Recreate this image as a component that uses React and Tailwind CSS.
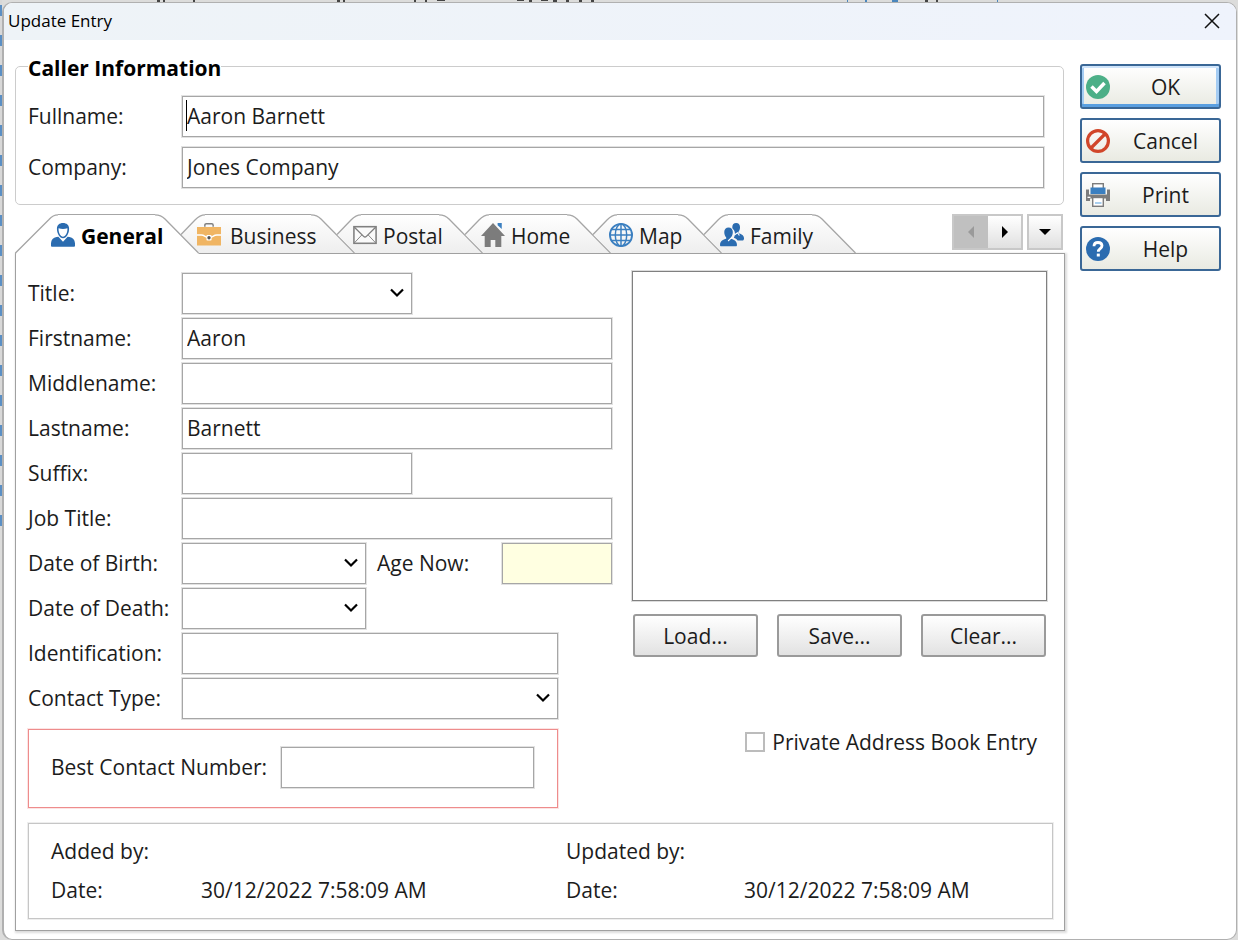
import { useState } from "react";

const FIELD = "h-[41px] min-w-0 border border-[#a6a6a6] px-1 pb-[2px] text-[21px] text-[#1c1c1c] shadow-[0_0_0_1px_#e2e2e2] outline-none";
const INPUT = `${FIELD} bg-white`;

function UserIcon() {
  return (
    <svg width="24" height="24" viewBox="0 0 26 26" className="shrink-0">
      <path d="M0 24.500c-.4-5.500 1.500-8 6-9.200l2-.4 5 5.500 5-5.500 2 .4c4.500 1.200 6.400 3.700 6 9.200-.1.900-.5 1.300-1 1.300H1c-.5 0-.9-.4-1-1.300z" fill="#2b6cb0" />
      <path d="M13 0c3.900 0 6.600 2.300 6.600 6.300 0 5-3 10.300-6.600 10.300S6.400 11.300 6.400 6.300C6.400 2.300 9.100 0 13 0z" fill="#2b6cb0" />
      <path d="M8.200 5.800c3.200 1 6.400 1 9.600 0 .3 4.800-2.300 9.200-4.800 9.200s-5.100-4.400-4.800-9.200z" fill="#fff" />
    </svg>
  );
}

function CaseIcon() {
  return (
    <svg width="24" height="24" viewBox="0 0 26 26" className="shrink-0">
      <path d="M8.500 4V2.400c0-1 .6-1.600 1.600-1.600h5.800c1 0 1.600.6 1.600 1.600V4" fill="none" stroke="#808080" strokeWidth="1.600" />
      <path d="M0 4.300h26v20.200H0z" fill="#f0b563" />
      <path d="M0 13h4.500c3.800 0 4.700 3 8.500 3s4.700-3 8.500-3H26" fill="none" stroke="#fff" strokeWidth="1.400" />
      <rect x="10.200" y="13" width="5.600" height="6" rx="1" fill="#fff" />
      <circle cx="13" cy="16" r="1.800" fill="#555" />
    </svg>
  );
}

function MailIcon() {
  return (
    <svg width="24" height="24" viewBox="0 0 26 26" className="shrink-0" fill="none" stroke="#808080">
      <rect x="1" y="4" width="24" height="18" strokeWidth="1.700" fill="#fafafa" />
      <path d="M1.500 4.500l10 10c1 1 2 1 3 0l10-10" strokeWidth="1.500" />
      <path d="M1.500 21.500l8-8.500M24.500 21.500l-8-8.500" strokeWidth="1" />
    </svg>
  );
}

function HomeIcon() {
  return (
    <svg width="24" height="24" viewBox="0 0 26 26" className="shrink-0">
      <path d="M18 0h4.500v6.500L18 2.500z" fill="#3b7fc0" />
      <path d="M13 0L0 14h4v12h6.500v-7.500h5V26H22V14h4z" fill="#7c7c7c" />
    </svg>
  );
}

function GlobeIcon() {
  return (
    <svg width="24" height="24" viewBox="0 0 26 26" className="shrink-0" fill="none" stroke="#3b7fc0" strokeWidth="1.600">
      <circle cx="13" cy="13" r="12" strokeWidth="2" />
      <ellipse cx="13" cy="13" rx="6.200" ry="12" />
      <path d="M13 1v24M1 13h24M3 7h20M3 19h20" />
    </svg>
  );
}

function FamilyIcon() {
  return (
    <svg width="24" height="24" viewBox="0 0 26 26" className="shrink-0" fill="#2b6cb0">
      <path d="M17.500 0c2.600 0 4.200 1.700 4.200 4.500 0 2.200-.8 4-1.800 5.200v1.500c2.800.8 5.700 1.700 6.100 5 .1 1.400-.3 2.300-1 2.800h-6c-.8-1.600-2.300-2.500-4-3.100 1.600-2.300 1.700-6-.2-8.600-.8-1-1.500-1.300-1.500-2.800C13.300 1.700 14.900 0 17.500 0z" />
      <path d="M9.300 4.800c2.800 0 4.600 1.900 4.600 4.900 0 2.600-1 4.700-2.100 6v1.400c3.100.9 6.300 1.800 6.600 6.600 0 1-.4 1.600-1.200 1.600H1.200c-.8 0-1.200-.6-1.200-1.600.3-4.800 3.500-5.700 6.700-6.600v-1.400c-1.100-1.300-2.100-3.400-2.100-6 0-3 1.900-4.900 4.700-4.900z" />
      <path d="M8.800 19.500l4-4M15.500 13l3.500-2.500 2 3" stroke="#fff" strokeWidth="1.200" fill="none" />
    </svg>
  );
}

function OkIcon() {
  return (
    <svg width="24" height="24" viewBox="0 0 24 24" className="shrink-0">
      <circle cx="12" cy="12" r="12" fill="#4caf87" />
      <path d="M5.500 11.500l5 5 8-8.500" fill="none" stroke="#fff" strokeWidth="3.500" />
    </svg>
  );
}

function CancelIcon() {
  return (
    <svg width="24" height="24" viewBox="0 0 24 24" className="shrink-0" fill="none" stroke="#d1462a" strokeWidth="3.200">
      <circle cx="12" cy="12" r="10.400" />
      <path d="M19 5L5 19" />
    </svg>
  );
}

function PrintIcon() {
  return (
    <svg width="24" height="24" viewBox="0 0 24 24" className="shrink-0">
      <rect x="6.700" y=".7" width="10.600" height="6" fill="#fff" stroke="#7c7c7c" strokeWidth="1.400" />
      <path d="M0 6.500h3v5h18v-5h3V18h-4v-2.500H4V18H0z" fill="#7c7c7c" />
      <path d="M4.500 4.500h15V11h-15z" fill="#3b7fc0" />
      <rect x="1.500" y="13.700" width="3" height="1.300" fill="#fff" />
      <rect x="6.700" y="14.500" width="10.600" height="8.800" fill="#fff" stroke="#7c7c7c" strokeWidth="1.400" />
      <path d="M9 20h6.500" stroke="#8cc0ea" strokeWidth="1.300" />
    </svg>
  );
}

function HelpIcon() {
  return (
    <svg width="24" height="24" viewBox="0 0 24 24" className="shrink-0">
      <circle cx="12" cy="12" r="12" fill="#2b6cb0" />
      <path d="M8 9.300c0-2.500 1.600-3.800 4-3.800s4 1.200 4 3.300c0 2.900-3.700 2.900-3.700 6" fill="none" stroke="#fff" strokeWidth="2.800" />
      <rect x="10.800" y="16.600" width="3" height="2.900" fill="#fff" />
    </svg>
  );
}

const TABS = [
  { name: "General", Icon: UserIcon, body: "w-[97px]", text: "pl-[6px]" },
  { name: "Business", Icon: CaseIcon, body: "w-[106px]", text: "pl-[9px]" },
  { name: "Postal", Icon: MailIcon, body: "w-[78px]", text: "pl-[6px]" },
  { name: "Home", Icon: HomeIcon, body: "w-[78px]", text: "pl-[6px]" },
  { name: "Map", Icon: GlobeIcon, body: "w-[61px]", text: "pl-[6px]" },
  { name: "Family", Icon: FamilyIcon, body: "w-[84px]", text: "pl-[6px]" },
];

function Tab({ tab, index, selected, onSelect }) {
  const { name, Icon, body, text } = tab;
  const id = `tab-shade-${index}`;
  const fill = selected ? "#fff" : `url(#${id})`;
  const base = selected ? 40 : 39;
  const shade = (
    <defs>
      <linearGradient id={id} gradientUnits="userSpaceOnUse" x1="0" y1="0" x2="0" y2="39">
        <stop offset="0" stopColor="#ffffff" />
        <stop offset="1" stopColor="#eeeeee" />
      </linearGradient>
    </defs>
  );
  return (
    <button
      type="button"
      role="tab"
      aria-selected={selected}
      onClick={onSelect}
      className={`relative flex h-10 shrink-0 ${index ? "-ml-[18px]" : ""} ${selected ? "z-10" : ""}`}
    >
      {index ? (
        <svg width="24" height="40" className="shrink-0">
          {shade}
          <path d="M0 20.500L14 6Q19 .8 24 .8V39H18.500z" fill={fill} />
          <path d="M0 20.500L14 6Q19 .8 24 .8" fill="none" stroke="#a6a6a6" strokeWidth="1.300" />
        </svg>
      ) : (
        <svg width="43" height="40" className="shrink-0">
          {shade}
          <path d={`M.5 ${base}V39L34 5.500Q38 .8 43 .8V${base}z`} fill={fill} />
          <path d="M.5 40V39L34 5.500Q38 .8 43 .8" fill="none" stroke="#a6a6a6" strokeWidth="1.300" />
        </svg>
      )}
      <span className={`border-t border-[#a6a6a6] ${body} ${selected ? "h-10 bg-white" : "h-[39px] bg-linear-to-b from-white to-[#eeeeee]"}`} />
      <svg width="44" height="40" className="shrink-0">
        <path d={`M0 .8Q6 .8 10 5L43.500 39V${base}H0z`} fill={fill} />
        <path d="M0 .8Q6 .8 10 5L43.500 39" fill="none" stroke="#a6a6a6" strokeWidth="1.300" />
      </svg>
      <span className={`absolute inset-y-0 flex items-center pt-[2px] whitespace-nowrap ${index ? "left-[16px]" : "left-[36px]"}`}>
        <Icon />
        <span className={`pt-px ${text} ${selected ? "font-bold text-black" : ""}`}>{name}</span>
      </span>
    </button>
  );
}

function Row({ id, label, children }) {
  return (
    <div className="flex items-center">
      <label htmlFor={id} className="w-[154px] shrink-0 pb-[2px] whitespace-nowrap">{label}</label>
      {children}
    </div>
  );
}

function Select({ id, width }) {
  return (
    <span className={`relative flex ${width}`}>
      <select id={id} className={`${INPUT} w-full appearance-none`}>
        <option></option>
      </select>
      <svg width="14" height="10" viewBox="0 0 14 10" className="pointer-events-none absolute top-[15px] right-2" fill="none" stroke="#000" strokeWidth="2.200">
        <path d="M1 1.500l6 6 6-6" />
      </svg>
    </span>
  );
}

const ACTION = "flex h-[45px] w-full items-center rounded-[3px] border-2 border-[#3a6796] bg-linear-to-b from-white to-[#e9eae2] pl-1";

function Action({ label, Icon, primary }) {
  return (
    <button
      type="button"
      className={primary ? `${ACTION} shadow-[inset_0_2px_0_#cfe4fa,inset_0_-3px_0_#5a9fe0,inset_2px_0_0_#a4ccf3,inset_-3px_0_0_#a4ccf3]` : ACTION}
    >
      <Icon />
      <span className="flex-1 pl-[2px] text-center">{label}</span>
    </button>
  );
}

function Backdrop() {
  return (
    <div aria-hidden="true" className="pointer-events-none absolute inset-x-0 top-0">
      <div className="h-[530px] w-[2px] bg-[linear-gradient(180deg,#d8d8d8_0_5px,#5b8fc4_5px_16px,#d8d8d8_16px_30px)] bg-[length:2px_30px]" />
      <svg width="1030" height="2" className="absolute top-0 left-0">
        <path d="M157 0h3v2h-3zM163 0h2v2h-2zM193 0h2v2h-2zM337 0h3v2h-3zM343 0h2v2h-2zM414 0h2v2h-2zM425 0h2v2h-2zM437 0h8v1h-8z" fill="#444" />
        <path d="M517 0h7v1h-7zM529 0h3v2h-3zM541 0h7v1h-7zM553 0h4v2h-4zM566 0h3v2h-3zM579 0h3v2h-3zM591 0h3v2h-3zM925 0h3v2h-3zM936 0h2v2h-2z" fill="#444" />
        <path d="M847 0h1v2h-1zM865 0h2v2h-2zM997 0h1v2h-1zM892 0h6v2h-6z" fill="#4a86bd" />
      </svg>
    </div>
  );
}

export default function App() {
  const [active, setActive] = useState(0);
  return (
    <div className="relative min-h-screen overflow-hidden bg-[#dcdcdb] pt-[2px] pr-px pl-[2px] font-['Open_Sans','Noto_Sans',sans-serif] text-[21px] leading-[30px] text-[#1c1c1c]">
      <Backdrop />
      <main className="relative flex min-h-[938px] flex-col overflow-hidden rounded-[10px] border border-l-2 border-[#b0b0b0] bg-white">
        <header className="flex h-[37px] items-center justify-between bg-linear-to-r from-[#eef3f7] to-[#eff3fc] pr-4 pb-[2px] pl-1">
          <h1 className="text-[17px] leading-6 text-black">Update Entry</h1>
          <button type="button" aria-label="Close">
            <svg width="16" height="16" viewBox="0 0 16 16" stroke="#111" strokeWidth="1.500"><path d="M1 1l14 14M15 1L1 15" /></svg>
          </button>
        </header>

        <div className="flex gap-4 pt-[11px] pr-[15px] pl-[11px]">
          <div className="min-w-0 flex-1">
            <fieldset className="rounded-[5px] border border-[#cccccc] pr-[19px] pb-4 pl-[12px]">
              <legend className="pt-[3px] leading-7 font-bold text-black">Caller Information</legend>
              <div className="flex flex-col gap-[10px] pt-[14px]">
                <Row id="fullname" label="Fullname:">
                  <span className="relative flex flex-1">
                    <input id="fullname" defaultValue="Aaron Barnett" className={`${INPUT} flex-1`} />
                    <span className="pointer-events-none absolute top-1 left-1 h-[31px] w-px bg-black" />
                  </span>
                </Row>
                <Row id="company" label="Company:"><input id="company" defaultValue="Jones Company" className={`${INPUT} flex-1`} /></Row>
              </div>
            </fieldset>

            <div className="flex items-start justify-between pt-[9px]">
              <div role="tablist" className="-mb-px flex">
                {TABS.map((tab, i) => (
                  <Tab key={tab.name} tab={tab} index={i} selected={active === i} onSelect={() => setActive(i)} />
                ))}
              </div>
              <div className="flex gap-1 pr-px">
                <div className="flex h-9 border-2 border-[#c8c8c8]">
                  <button type="button" aria-label="Previous tab" disabled className="flex w-[34px] items-center justify-center bg-[#c0c0c0]">
                    <svg width="6" height="12" viewBox="0 0 6 12" fill="#9a9a9a"><path d="M6 0v12L0 6z" /></svg>
                  </button>
                  <button type="button" aria-label="Next tab" className="flex w-[33px] items-center justify-center bg-linear-to-b from-white to-[#e0e0e0]">
                    <svg width="6" height="12" viewBox="0 0 6 12"><path d="M0 0v12l6-6z" /></svg>
                  </button>
                </div>
                <button type="button" aria-label="All tabs" className="flex h-9 w-9 items-center justify-center border-2 border-[#c8c8c8] bg-linear-to-b from-white to-[#e0e0e0]">
                  <svg width="12" height="6" viewBox="0 0 12 6"><path d="M0 0h12L6 6z" /></svg>
                </button>
              </div>
            </div>

            <section role="tabpanel" className="-mr-px border border-[#a0a0a0] pt-[17px] pr-[11px] pb-[11px] pl-3 shadow-[1px_1px_2px_1px_#dcdcdc]">
              <div className="flex gap-5">
                <div className="flex w-[584px] shrink-0 flex-col gap-1 pt-[2px]">
                  <Row id="title" label="Title:"><Select id="title" width="w-[230px]" /></Row>
                  <Row id="first" label="Firstname:"><input id="first" defaultValue="Aaron" className={`${INPUT} flex-1`} /></Row>
                  <Row id="middle" label="Middlename:"><input id="middle" className={`${INPUT} flex-1`} /></Row>
                  <Row id="last" label="Lastname:"><input id="last" defaultValue="Barnett" className={`${INPUT} flex-1`} /></Row>
                  <Row id="suffix" label="Suffix:"><input id="suffix" className={`${INPUT} w-[230px]`} /></Row>
                  <Row id="job" label="Job Title:"><input id="job" className={`${INPUT} flex-1`} /></Row>
                  <Row id="birth" label="Date of Birth:">
                    <Select id="birth" width="w-[184px]" />
                    <label htmlFor="age" className="flex-1 pb-[2px] pl-[11px]">Age Now:</label>
                    <input id="age" readOnly className={`${FIELD} w-[110px] bg-[#ffffe1]`} />
                  </Row>
                  <Row id="death" label="Date of Death:"><Select id="death" width="w-[184px]" /></Row>
                  <Row id="ident" label="Identification:"><input id="ident" className={`${INPUT} w-[376px]`} /></Row>
                  <Row id="type" label="Contact Type:"><Select id="type" width="w-[376px]" /></Row>
                  <div className="mt-[6px] flex h-[79px] w-[530px] items-center justify-between border border-[#ee8c8c] pr-[23px] pb-[2px] pl-[22px] shadow-[0_0_0_1px_#fce4e4]">
                    <label htmlFor="best" className="pb-[2px] whitespace-nowrap">Best Contact Number:</label>
                    <input id="best" className={`${INPUT} w-[253px]`} />
                  </div>
                </div>

                <div className="min-w-0 flex-1 pr-[6px]">
                  <div role="img" aria-label="Photo" className="h-[330px] border border-[#808080] shadow-[0_0_0_1px_#dddddd]" />
                  <div className="mt-[13px] grid grid-cols-3 gap-[19px] px-px">
                    {["Load...", "Save...", "Clear..."].map((label) => (
                      <button key={label} type="button" className="h-[43px] rounded-[3px] border-2 border-[#9a9a9a] bg-linear-to-b from-white to-[#e2e2e2]">{label}</button>
                    ))}
                  </div>
                  <label className="mt-[70px] flex items-center justify-end gap-[7px] pr-[10px]">
                    <input type="checkbox" className="size-5 appearance-none border-2 border-[#bcbcbc] bg-white checked:bg-[#2b6cb0]" />
                    Private Address Book Entry
                  </label>
                </div>
              </div>

              <dl className="mt-[15px] grid grid-cols-[150px_365px_178px_1fr] gap-y-[9px] border border-[#c6c6c6] pt-3 pb-[13px] pl-[22px] shadow-[0_0_0_1px_#eeeeee]">
                <dt>Added by:</dt><dd></dd>
                <dt>Updated by:</dt><dd></dd>
                <dt>Date:</dt><dd>30/12/2022 7:58:09 AM</dd>
                <dt>Date:</dt><dd>30/12/2022 7:58:09 AM</dd>
              </dl>
            </section>
          </div>

          <aside className="flex w-[141px] shrink-0 flex-col gap-[9px] pt-[13px]">
            <Action label="OK" Icon={OkIcon} primary />
            <Action label="Cancel" Icon={CancelIcon} />
            <Action label="Print" Icon={PrintIcon} />
            <Action label="Help" Icon={HelpIcon} />
          </aside>
        </div>
      </main>
    </div>
  );
}
